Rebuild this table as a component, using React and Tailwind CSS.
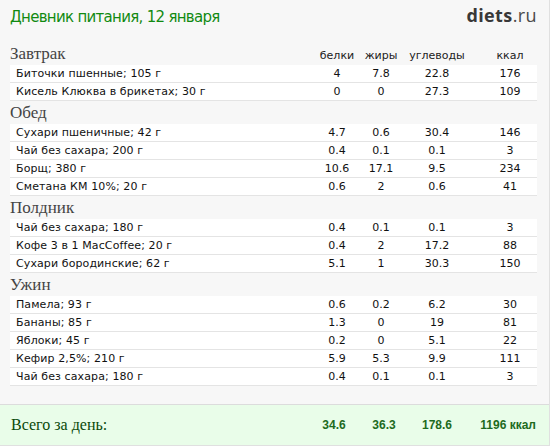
import React from "react";

const sections = [
  {
    title: "Завтрак",
    rows: [
      ["Биточки пшенные; 105 г", "4", "7.8", "22.8", "176"],
      ["Кисель Клюква в брикетах; 30 г", "0", "0", "27.3", "109"],
    ],
  },
  {
    title: "Обед",
    rows: [
      ["Сухари пшеничные; 42 г", "4.7", "0.6", "30.4", "146"],
      ["Чай без сахара; 200 г", "0.4", "0.1", "0.1", "3"],
      ["Борщ; 380 г", "10.6", "17.1", "9.5", "234"],
      ["Сметана КМ 10%; 20 г", "0.6", "2", "0.6", "41"],
    ],
  },
  {
    title: "Полдник",
    rows: [
      ["Чай без сахара; 180 г", "0.4", "0.1", "0.1", "3"],
      ["Кофе 3 в 1 MacCoffee; 20 г", "0.4", "2", "17.2", "88"],
      ["Сухари бородинские; 62 г", "5.1", "1", "30.3", "150"],
    ],
  },
  {
    title: "Ужин",
    rows: [
      ["Памела; 93 г", "0.6", "0.2", "6.2", "30"],
      ["Бананы; 85 г", "1.3", "0", "19", "81"],
      ["Яблоки; 45 г", "0.2", "0", "5.1", "22"],
      ["Кефир 2,5%; 210 г", "5.9", "5.3", "9.9", "111"],
      ["Чай без сахара; 180 г", "0.4", "0.1", "0.1", "3"],
    ],
  },
];

const grid = "grid grid-cols-[302px_50px_38px_74px_63px]";
const sans = "font-['DejaVu_Sans',Verdana,sans-serif]";
const serif = "font-['Liberation_Serif',serif]";

export default function App() {
  return (
    <div className="w-[550px] h-[446px] bg-[#f7f7f7] border-r border-b border-[#e0e0e0] flex flex-col overflow-hidden">
      <div className="h-[42px] shrink-0 flex items-start justify-between pl-[10px] pr-[12px]">
        <div className={`${sans} text-[15px] leading-none text-[#118a11] mt-[10px] tracking-[-0.7px]`}>
          Дневник питания, 12 января
        </div>
        <div className="font-['Open_Sans',sans-serif] text-[18px] leading-none mt-[6px] text-[#383838] tracking-[0.4px]">
          <span className="font-bold">diets</span>
          <span className="font-normal text-[#4a4a4a]">.ru</span>
        </div>
      </div>

      <div className="pl-[10px] w-[537px] flex flex-col">
        {sections.map((s, si) => (
          <div key={si} className="flex flex-col">
            <div className={`${grid} h-[23px] items-end pb-[3px]`}>
              <div className={`${serif} text-[17px] leading-none text-[#444]`}>{s.title}</div>
              {si === 0 && (
                <>
                  <div className={`${sans} text-[11px] leading-none text-[#222] text-center pb-[1px]`}>белки</div>
                  <div className={`${sans} text-[11px] leading-none text-[#222] text-center pb-[1px]`}>жиры</div>
                  <div className={`${sans} text-[11px] leading-none text-[#222] text-center pb-[1px]`}>углеводы</div>
                  <div className={`${sans} text-[11px] leading-none text-[#222] text-center pl-[9px] pb-[1px]`}>ккал</div>
                </>
              )}
            </div>
            {s.rows.map((r, ri) => (
              <div
                key={ri}
                className={`${grid} h-[18px] items-center bg-white border-b border-[#e4e4e4] ${sans} text-[11px] leading-none text-[#111]`}
              >
                <div className="pl-[6px] tracking-[0.1px]">{r[0]}</div>
                <div className="text-center">{r[1]}</div>
                <div className="text-center">{r[2]}</div>
                <div className="text-center">{r[3]}</div>
                <div className="text-center pl-[9px]">{r[4]}</div>
              </div>
            ))}
          </div>
        ))}
      </div>

      <div className="h-[18px] shrink-0" />

      <div className="border-t border-[#dcdcdc] h-[41px] bg-[#e9fde9] flex items-center">
        <div className="pl-[10px] w-[537px]">
          <div className={`${grid} items-center`}>
            <div className={`${serif} text-[16px] leading-none text-[#0a4a0a] pl-[1px]`}>Всего за день:</div>
            <div className="font-['Liberation_Sans',Arial,sans-serif] font-bold text-[12px] leading-none text-[#1d6b1d] text-center pr-[6px]">34.6</div>
            <div className="font-['Liberation_Sans',Arial,sans-serif] font-bold text-[12px] leading-none text-[#1d6b1d] text-center pl-[6px]">36.3</div>
            <div className="font-['Liberation_Sans',Arial,sans-serif] font-bold text-[12px] leading-none text-[#1d6b1d] text-center">178.6</div>
            <div className="font-['Liberation_Sans',Arial,sans-serif] font-bold text-[12px] leading-none text-[#1d6b1d] text-right pr-[1px] whitespace-nowrap">1196 ккал</div>
          </div>
        </div>
      </div>
    </div>
  );
}
